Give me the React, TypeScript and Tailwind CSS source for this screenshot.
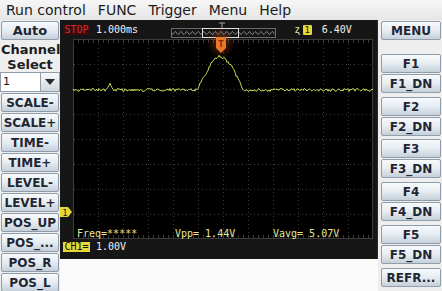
import React from "react";

const btn =
  "flex items-center justify-center h-[19px] rounded-[2px] border border-[#8f9caa] bg-gradient-to-b from-[#f8fafc] via-[#e6ecf1] to-[#c6d0da] text-[12px] font-bold text-[#1f2633] leading-none";

function makeWave(): string {
  let s = 987654;
  const rand = () => {
    s = (s * 1103515245 + 12345) & 0x7fffffff;
    return s / 0x7fffffff;
  };
  const anchors: [number, number][] = [
    [0, 0], [33, 0], [37, -6], [41, 0], [125, 0], [127, -6], [130, -12], [134, -19],
    [138, -26], [142, -31], [146, -34], [149, -33], [152, -31], [156, -27], [160, -21],
    [164, -13], [168, -5], [171, 0], [300, 0],
  ];
  const env = (x: number) => {
    for (let i = 0; i < anchors.length - 1; i++) {
      const [x0, y0] = anchors[i];
      const [x1, y1] = anchors[i + 1];
      if (x >= x0 && x <= x1) return y0 + ((y1 - y0) * (x - x0)) / (x1 - x0);
    }
    return 0;
  };
  const pts: string[] = [];
  for (let x = 0; x <= 300; x++) {
    const y = 51 + env(x) + (rand() - 0.5) * 3;
    pts.push(`${x},${y.toFixed(1)}`);
  }
  return "M" + pts.join(" L");
}

function makeMini(): string {
  const pts: string[] = [];
  for (let x = 0; x <= 104; x++) {
    const y = 7 + Math.sin(x * 1.1) * 1.5;
    pts.push(`${x + 2},${y.toFixed(1)}`);
  }
  return "M" + pts.join(" L");
}

const wave = makeWave();
const mini = makeMini();

function Grid() {
  const v: number[] = [];
  for (let i = 1; i < 12; i++) v.push(i * 25);
  const h: number[] = [];
  for (let j = 1; j < 8; j++) h.push(j * 25);
  return (
    <svg width="300" height="200" className="absolute inset-0 overflow-visible">
      <rect x="0.5" y="0.5" width="299" height="199" fill="#000" stroke="#3c3c3c" />
      {v.map((x) => (
        <line key={"v" + x} x1={x + 0.5} y1="1" x2={x + 0.5} y2="199" stroke="#3a3a3a" strokeDasharray="1 3" />
      ))}
      {h.map((y) => (
        <line key={"h" + y} x1="1" y1={y + 0.5} x2="299" y2={y + 0.5} stroke="#3a3a3a" strokeDasharray="1 3" />
      ))}
      {Array.from({ length: 60 }).map((_, i) => (
        <line key={"t" + i} x1={i * 5 + 0.5} y1="1" x2={i * 5 + 0.5} y2="4" stroke="#3a3a3a" />
      ))}
      {Array.from({ length: 60 }).map((_, i) => (
        <line key={"b" + i} x1={i * 5 + 0.5} y1="196" x2={i * 5 + 0.5} y2="199" stroke="#3a3a3a" />
      ))}
      <path d={wave} fill="none" stroke="#c8d650" strokeWidth="1" />
      <defs>
        <radialGradient id="glow" cx="0.5" cy="0.5" r="0.5">
          <stop offset="0" stopColor="#c0501a" stopOpacity="0.5" />
          <stop offset="1" stopColor="#c0501a" stopOpacity="0" />
        </radialGradient>
      </defs>
      <ellipse cx="148" cy="4" rx="14" ry="16" fill="url(#glow)" />
      <path d="M143,-2 L153,-2 L153,9 L148,14 L143,9 Z" fill="#e8782a" />
      <text x="148" y="8" fontSize="9" fontFamily="DejaVu Sans Mono, monospace" textAnchor="middle" fill="#7a2a08" fontWeight="bold">T</text>
    </svg>
  );
}

export default function App() {
  const mono = "font-['DejaVu_Sans_Mono',monospace]";
  return (
    <div className="w-[442px] h-[291px] overflow-hidden bg-[#eeeeee] font-['DejaVu_Sans',sans-serif] flex flex-col">
      {/* menu bar */}
      <div className="h-[21px] flex items-start bg-gradient-to-b from-[#f6f6f6] to-[#e6e6e6] text-[14px] leading-[20px] text-[#1c1c1c]">
        <span className="px-[6px]">Run control</span>
        <span className="px-[6px]">FUNC</span>
        <span className="px-[6px]">Trigger</span>
        <span className="px-[6px]">Menu</span>
        <span className="px-[6px]">Help</span>
      </div>
      <div className="flex flex-1">
        {/* left panel */}
        <div className="w-[60px] flex flex-col pl-px pr-px">
          <div className={btn + " mt-px h-[18px] text-[13px]"}>Auto</div>
          <div className="text-[13px] font-bold text-center leading-[15px] text-[#1c1c1c] mt-[2px] h-[30px]">
            Channel
            <br />
            Select
          </div>
          <div className="h-[20px] flex border border-[#8f9caa] bg-white mr-[-1px] ml-[-1px]">
            <div className="flex-1 text-[11px] leading-[18px] pl-[2px] text-[#111]">1</div>
            <div className="w-[19px] flex items-center justify-center border-l border-[#8f9caa] bg-gradient-to-b from-[#f8fafc] to-[#cfd8e0]">
              <svg width="10" height="6">
                <path d="M0,0 L10,0 L5,6 Z" fill="#2a2a2a" />
              </svg>
            </div>
          </div>
          <div className="flex flex-col gap-px mt-px">
            {["SCALE-", "SCALE+", "TIME-", "TIME+", "LEVEL-", "LEVEL+", "POS_UP", "POS_...", "POS_R", "POS_L"].map((t) => (
              <div key={t} className={btn}>
                {t}
              </div>
            ))}
          </div>
        </div>
        {/* scope */}
        <div className="w-[318px] flex flex-col bg-[#fbfbfb]">
          <div className="h-[239px] bg-[#161616] flex flex-col border-r border-[#2a2a2a]">
            <div className={"h-[19px] flex items-center " + mono}>
              <div className="ml-[3px] w-[27px] h-[10px] bg-[#3c0c0c] text-[#d42c2c] text-[10px] leading-[10px] flex items-center justify-center">
                STOP
              </div>
              <div className="ml-[6px] text-[10px] leading-[10px] text-[#f2f2f2]">1.000ms</div>
              <svg width="108" height="16" className="ml-[31px] mt-[2px] overflow-visible">
                <rect x="2.5" y="5.5" width="104" height="9" fill="none" stroke="#6a6a6a" />
                <path d={mini} transform="translate(0,3)" fill="none" stroke="#9a9a9a" strokeWidth="0.8" />
                <rect x="33.5" y="5.5" width="36" height="9" fill="none" stroke="#e0e0e0" />
                <path d="M50,0 L56,0 M53,0 L53,5" stroke="#a0a0a0" />
              </svg>
              <div className="ml-[17px] text-[11px] leading-[10px] text-[#e8e0a0]">ʐ</div>
              <div className="ml-[2px] w-[9px] h-[10px] bg-[#e6d83a] text-[#111] text-[9px] leading-[10px] flex items-center justify-center rounded-[1px]">
                1
              </div>
              <div className="ml-[10px] text-[10px] leading-[10px] text-[#f0f0e0]">6.40V</div>
            </div>
            <div className="relative ml-[13px] w-[300px] h-[200px]">
              <Grid />
              <div className={"absolute left-[-13px] top-[168px] " + mono}>
                <svg width="12" height="10">
                  <path d="M0,0 L8,0 L12,5 L8,10 L0,10 Z" fill="#e6d83a" />
                  <text x="5" y="8.5" fontSize="8" fill="#111" textAnchor="middle" fontFamily="DejaVu Sans Mono, monospace">1</text>
                </svg>
              </div>
              <div className={"absolute left-[4px] top-[190px] text-[10px] leading-[10px] text-[#e6e49a] whitespace-pre " + mono}>
                Freq=*****
              </div>
              <div className={"absolute left-[102px] top-[190px] text-[10px] leading-[10px] text-[#e6e49a] whitespace-pre " + mono}>
                Vpp= 1.44V
              </div>
              <div className={"absolute left-[200px] top-[190px] text-[10px] leading-[10px] text-[#e6e49a] whitespace-pre " + mono}>
                Vavg= 5.07V
              </div>
            </div>
            <div className={"h-[16px] flex items-center " + mono}>
              <div className="ml-[3px] w-[27px] h-[10px] bg-[#e6d83a] text-[#111] text-[10px] leading-[10px] flex items-center justify-center">
                CH1=
              </div>
              <div className="ml-[6px] text-[10px] leading-[10px] text-[#f2f2f2]">1.00V</div>
            </div>
          </div>
        </div>
        {/* right panel */}
        <div className="w-[64px] flex flex-col pl-[3px] pr-px">
          <div className={btn + " mt-px"}>MENU</div>
          <div className={btn + " mt-[14px]"}>F1</div>
          <div className={btn + " mt-px"}>F1_DN</div>
          <div className={btn + " mt-[4px]"}>F2</div>
          <div className={btn + " mt-px"}>F2_DN</div>
          <div className={btn + " mt-[3px]"}>F3</div>
          <div className={btn + " mt-px"}>F3_DN</div>
          <div className={btn + " mt-[4px]"}>F4</div>
          <div className={btn + " mt-px"}>F4_DN</div>
          <div className={btn + " mt-[4px]"}>F5</div>
          <div className={btn + " mt-px"}>F5_DN</div>
          <div className={btn + " mt-[4px]"}>REFR...</div>
        </div>
      </div>
    </div>
  );
}
